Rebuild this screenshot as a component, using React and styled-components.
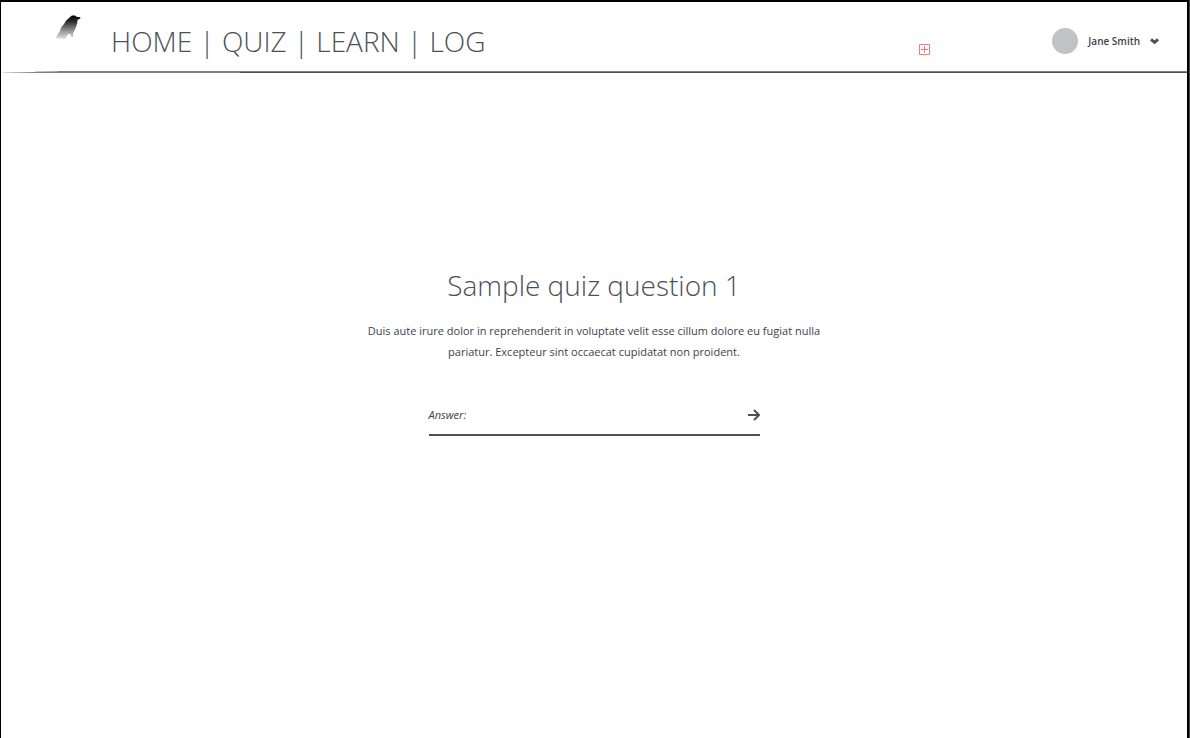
import React from "react";
import styled, { createGlobalStyle } from "styled-components";

const ink = "#4b5256";

const GlobalStyle = createGlobalStyle`
  *, *::before, *::after { box-sizing: border-box; }
  body {
    margin: 0;
    background: #fff;
    color: ${ink};
    font-family: "Open Sans", "Noto Sans", sans-serif;
    font-size: 11px;
  }
`;

const Edge = styled.div`
  border-right: 1px solid #444;
`;

const Frame = styled.div`
  min-height: 100vh;
  display: flex;
  flex-direction: column;
  border: solid #000;
  border-width: 2px 2px 0 1px;
`;

const Header = styled.header`
  display: flex;
  align-items: flex-end;
  min-height: 69px;
  padding: 12px 27px 11px 54px;
`;

const Logo = styled.a`
  align-self: flex-start;
  width: 26px;
  height: 28px;
  margin-right: 30px;

  svg { display: block; }
`;

const Nav = styled.nav`
  display: flex;
  font-size: 28px;
  font-weight: 300;
  line-height: 38px;
  white-space: pre;
`;

const NavLink = styled.a`
  color: inherit;
  text-decoration: none;
`;

const AddButton = styled.button`
  display: flex;
  margin: 0 122px 5px auto;
  padding: 0;
  border: 0;
  background: none;
`;

const UserButton = styled.button`
  display: flex;
  align-items: center;
  height: 38px;
  padding: 0;
  border: 0;
  background: none;
  color: #3c4347;
  font: 600 10px/14px "Open Sans", "Noto Sans", sans-serif;
`;

const Avatar = styled.span`
  width: 26px;
  height: 26px;
  margin-right: 10px;
  border-radius: 50%;
  background: #c1c2c4;
`;

const Chevron = styled.svg`
  margin-left: 9px;
`;

const Rule = styled.div`
  height: 2px;
  margin-left: 2px;
  background:
    linear-gradient(90deg, transparent 32px, #d0d3d4 32px, #a0a5a8 55px, #7a8286 55px) 0 0 / 100% 1px no-repeat,
    linear-gradient(90deg, #dcdedf, #7a8286 32px, #7a8286 237px, #4b5256 237px) 0 1px / 100% 1px no-repeat;
`;

const Main = styled.main`
  display: flex;
  flex-direction: column;
  align-items: center;
  padding: 193px 24px 24px;
`;

const Title = styled.h1`
  margin: 0;
  font-size: 28px;
  font-weight: 300;
  line-height: 38px;
`;

const Description = styled.p`
  max-width: 460px;
  margin: 16px 0 0;
  color: #3c4347;
  line-height: 21px;
  text-align: center;
`;

const AnswerForm = styled.form`
  display: flex;
  align-items: center;
  width: 100%;
  max-width: 331px;
  height: 38px;
  margin-top: 36px;
  padding-bottom: 2px;
  border-bottom: 2px solid ${ink};
`;

const AnswerLabel = styled.label`
  color: #3c4347;
  font-style: italic;
  line-height: 14px;
`;

const AnswerInput = styled.input`
  flex: 1;
  min-width: 0;
  padding: 0 8px;
  border: 0;
  outline: 0;
  background: none;
  color: inherit;
  font: inherit;
`;

const SubmitButton = styled.button`
  display: flex;
  padding: 0;
  border: 0;
  background: none;
  color: ${ink};
`;

const links = ["HOME", "QUIZ", "LEARN", "LOG"];

export default function App() {
  return (
    <Edge>
      <GlobalStyle />
      <Frame>
        <Header>
          <Logo href="#" aria-label="Home">
            <svg width="26" height="28" viewBox="0 0 26 28" aria-hidden="true">
              <defs>
                <linearGradient id="feathers" x1="0" y1="0" x2="0" y2="1">
                  <stop offset="0" stopColor="#000" />
                  <stop offset="0.25" stopColor="#2c2c2c" />
                  <stop offset="0.6" stopColor="#8a8a8a" />
                  <stop offset="1" stopColor="#e6e6e6" />
                </linearGradient>
              </defs>
              <path
                fill="url(#feathers)"
                d="M15 3 17 1.5h3l1.5 1.2 3.8.5v1.3l-2.8 1.5-.3 3-.8 3-1.4 3.5-1.8 3.5-.2 4h-2l-.3-3-2.7.2-1.5 2-1 2.5-2 .6-2.5-.8-2.5.3-1.5-.6-1.3.3 1.5-3.5 2.5-3.5 1.5-4 2.8-3.5 2.2-3.5 2.3-2Z"
              />
            </svg>
          </Logo>
          <Nav>
            {links.map((name, i) => (
              <React.Fragment key={name}>
                {i > 0 && <span>{" | "}</span>}
                <NavLink href={"#" + name.toLowerCase()}>{name}</NavLink>
              </React.Fragment>
            ))}
          </Nav>
          <AddButton aria-label="Add">
            <svg width="11" height="11" viewBox="0 0 11 11" fill="none" stroke="#f8787c">
              <path d="M.5.5h10v10H.5zM5.5 2v7M2 5.5h7" />
            </svg>
          </AddButton>
          <UserButton>
            <Avatar />
            Jane Smith
            <Chevron width="11" height="8" viewBox="0 0 11 8" aria-hidden="true">
              <path d="M2 2.3 5.5 5.3 9 2.3" fill="none" stroke={ink} strokeWidth="3" />
            </Chevron>
          </UserButton>
        </Header>
        <Rule />
        <Main>
          <Title>Sample quiz question 1</Title>
          <Description>
            Duis aute irure dolor in reprehenderit in voluptate velit esse cillum dolore eu fugiat
            nulla pariatur. Excepteur sint occaecat cupidatat non proident.
          </Description>
          <AnswerForm onSubmit={(e) => e.preventDefault()}>
            <AnswerLabel htmlFor="answer">Answer:</AnswerLabel>
            <AnswerInput id="answer" />
            <SubmitButton aria-label="Submit answer">
              <svg width="12" height="12" viewBox="0 0 12 12" fill="none" stroke="currentColor" strokeWidth="2">
                <path d="M0 6h10.5M6 1l5 5-5 5" />
              </svg>
            </SubmitButton>
          </AnswerForm>
        </Main>
      </Frame>
    </Edge>
  );
}
